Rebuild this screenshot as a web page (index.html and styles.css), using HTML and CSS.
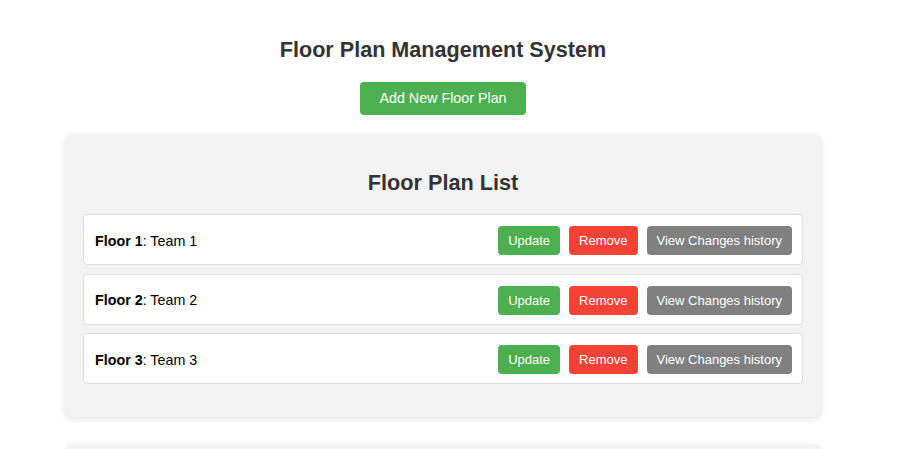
FILE: index.html
```html
<!DOCTYPE html>
<html>
<head>
<meta charset="utf-8">
<link rel="stylesheet" href="styles.css">
</head>
<body>
<h1 class="title">Floor Plan Management System</h1>
<div class="add-wrap"><button class="btn btn-add">Add New Floor Plan</button></div>
<div class="card">
  <h2 class="card-title">Floor Plan List</h2>
  <div class="list">
    <div class="item">
      <div class="item-text"><strong>Floor 1</strong>: Team 1</div>
      <div class="actions">
        <button class="btn btn-sm btn-green">Update</button>
        <button class="btn btn-sm btn-red">Remove</button>
        <button class="btn btn-sm btn-gray">View Changes history</button>
      </div>
    </div>
    <div class="item">
      <div class="item-text"><strong>Floor 2</strong>: Team 2</div>
      <div class="actions">
        <button class="btn btn-sm btn-green">Update</button>
        <button class="btn btn-sm btn-red">Remove</button>
        <button class="btn btn-sm btn-gray">View Changes history</button>
      </div>
    </div>
    <div class="item">
      <div class="item-text"><strong>Floor 3</strong>: Team 3</div>
      <div class="actions">
        <button class="btn btn-sm btn-green">Update</button>
        <button class="btn btn-sm btn-red">Remove</button>
        <button class="btn btn-sm btn-gray">View Changes history</button>
      </div>
    </div>
  </div>
</div>
<div class="card card-next"></div>
</body>
</html>
```

FILE: styles.css
```css
html, body {
  margin: 0;
  padding: 0;
}
body {
  font-family: "Liberation Sans", Arial, sans-serif;
  background: #fff;
  color: #000;
  padding: 20px 15px 20px 0;
}
.title {
  font-size: 21.6px;
  line-height: 26px;
  color: #333;
  text-align: center;
  margin: 17px 0 19px;
  font-weight: bold;
}
.add-wrap {
  display: flex;
  justify-content: center;
  margin-bottom: 19px;
}
.btn {
  border: none;
  color: #fff;
  font-family: "Liberation Sans", Arial, sans-serif;
  cursor: pointer;
  border-radius: 4px;
}
.btn-add {
  background: #4caf50;
  font-size: 14.3px;
  line-height: 17px;
  padding: 8px 19px;
}
.card {
  width: 720px;
  margin: 0 auto 27px;
  background: #f3f3f3;
  border-radius: 8px;
  padding: 18px 18px 33px;
  box-shadow: 0 2px 6px rgba(0, 0, 0, 0.12);
}
.card-title {
  font-size: 21.7px;
  line-height: 26px;
  color: #333;
  text-align: center;
  margin: 18px 0 18px;
}
.list {
  display: flex;
  flex-direction: column;
  gap: 8.5px;
}
.item {
  display: flex;
  align-items: center;
  justify-content: space-between;
  background: #fff;
  border: 1px solid #ddd;
  border-radius: 4px;
  padding: 11px 10px 9px 11px;
  font-size: 14.3px;
}
.actions {
  display: flex;
  gap: 9px;
}
.btn-sm {
  font-size: 13px;
  line-height: 15px;
  padding: 7px 10px;
}
.btn-green { background: #4caf50; }
.btn-red { background: #f44336; }
.btn-gray { background: #808080; }
.card-next {
  height: 100px;
}
```
